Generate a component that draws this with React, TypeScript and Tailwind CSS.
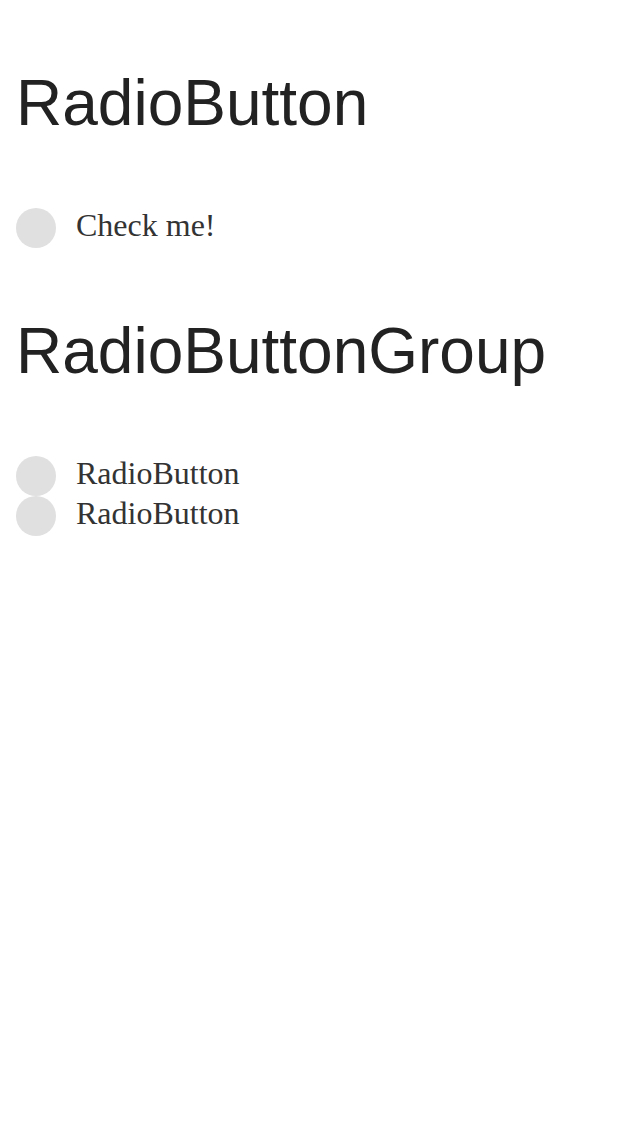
function Radio({ label }: { label: string }) {
  return (
    <label className="flex h-10 items-start">
      <span className="h-10 w-10 shrink-0 rounded-full bg-[#e0e0e0]" />
      <span className="ml-5 text-[32px] leading-[34px] text-[#333333] [font-family:'Liberation_Serif',serif]">
        {label}
      </span>
    </label>
  );
}

export default function App() {
  return (
    <div className="min-h-screen bg-white px-4 pt-[66px]">
      <h1 className="text-[64px] leading-[74px] text-[#222222] [font-family:'Liberation_Sans',Arial,sans-serif]">
        RadioButton
      </h1>
      <div className="mt-[68px]">
        <Radio label="Check me!" />
      </div>
      <h1 className="mt-[66px] text-[64px] leading-[74px] text-[#222222] [font-family:'Liberation_Sans',Arial,sans-serif]">
        RadioButtonGroup
      </h1>
      <div className="mt-[68px] flex flex-col">
        <Radio label="RadioButton" />
        <Radio label="RadioButton" />
      </div>
    </div>
  );
}
